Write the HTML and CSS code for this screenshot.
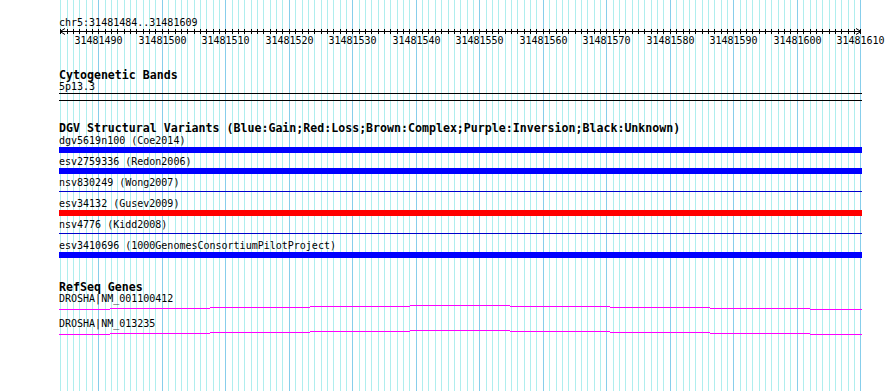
FILE: index.html
```html
<!DOCTYPE html>
<html lang="en">
    <head>
        <meta charset="UTF-8">
        <title>chr5:31481484..31481609</title>
        <link rel="stylesheet" href="styles.css">
        <script type="text/javascript" src="script.js" defer></script>
    </head>

    <body>
        <svg id="grid" width="890" height="391"></svg>

        <div id="view">
            <div class="locus">chr5:31481484..31481609</div>
            <svg id="ruler" width="831" height="20"></svg>

            <div class="track">
                <div class="track-title">Cytogenetic Bands</div>
                <div class="feature-label">5p13.3</div>
                <div class="band"></div>
            </div>

            <div class="track">
                <div class="track-title">DGV Structural Variants (Blue:Gain;Red:Loss;Brown:Complex;Purple:Inversion;Black:Unknown)</div>
                <div class="sv">
                    <div class="feature-label">dgv5619n100 (Coe2014)</div>
                    <div class="sv-glyph gain"></div>
                </div>
                <div class="sv">
                    <div class="feature-label">esv2759336 (Redon2006)</div>
                    <div class="sv-glyph gain"></div>
                </div>
                <div class="sv">
                    <div class="feature-label">nsv830249 (Wong2007)</div>
                    <div class="sv-glyph thin"></div>
                </div>
                <div class="sv">
                    <div class="feature-label">esv34132 (Gusev2009)</div>
                    <div class="sv-glyph loss"></div>
                </div>
                <div class="sv">
                    <div class="feature-label">nsv4776 (Kidd2008)</div>
                    <div class="sv-glyph thin"></div>
                </div>
                <div class="sv">
                    <div class="feature-label">esv3410696 (1000GenomesConsortiumPilotProject)</div>
                    <div class="sv-glyph gain"></div>
                </div>
            </div>

            <div class="track genes">
                <div class="track-title">RefSeq Genes</div>
                <div class="gene">
                    <div class="feature-label">DROSHA|NM_001100412</div>
                    <svg class="gene-line" width="803" height="13">
                        <path d="M0 5.5H51M51 4.5H151M151 3.5H251M251 2.5H351M351 1.5H451M451 2.5H551M551 3.5H651M651 4.5H751M751 5.5H803"/>
                    </svg>
                </div>
                <div class="gene">
                    <div class="feature-label">DROSHA|NM_013235</div>
                    <svg class="gene-line" width="803" height="13">
                        <path d="M0 5.5H51M51 4.5H151M151 3.5H251M251 2.5H351M351 1.5H451M451 2.5H551M551 3.5H651M651 4.5H751M751 5.5H803"/>
                    </svg>
                </div>
            </div>
        </div>
    </body>
</html>
```

FILE: styles.css
```css
body {
    margin: 0;
    padding: 0;
    background-color: white;
    color: black;
    font-family: "DejaVu Sans Mono", monospace;
    font-size: 10px;
    line-height: 12px;
}

#grid {
    position: absolute;
    top: 0;
    left: 0;
    shape-rendering: crispEdges;
}

#grid line {
    stroke: #afeeee;
    stroke-width: 1;
}

#grid line.major {
    stroke: #87ceeb;
}

#view {
    position: relative;
    margin-left: 59px;
    width: 803px;
    padding-top: 16px;
}

.locus {
    height: 12px;
    line-height: 14px;
}

#ruler {
    display: block;
    overflow: visible;
    shape-rendering: crispEdges;
}

#ruler line,
#ruler polyline {
    stroke: black;
    stroke-width: 1;
    fill: none;
}

#ruler polyline {
    shape-rendering: auto;
}

#ruler text {
    font-family: "DejaVu Sans Mono", monospace;
    font-size: 10px;
    fill: black;
}

.track {
    margin-top: 20px;
}

.track.genes {
    margin-top: 21px;
}

.track-title {
    font-weight: bold;
    font-size: 11.6px;
    height: 12px;
    line-height: 14px;
}

.feature-label {
    height: 12px;
    line-height: 14px;
    white-space: nowrap;
}

.band {
    margin-top: 1px;
    height: 6px;
    border-top: 1px solid black;
    border-bottom: 1px solid black;
}

.sv {
    padding-top: 1px;
    height: 20px;
}

.sv-glyph {
    margin-top: 1px;
    height: 6px;
}

.sv-glyph.gain {
    background: #0000ff;
}

.sv-glyph.loss {
    background: #ff0000;
}

.sv-glyph.thin {
    margin-top: 3px;
    height: 1px;
    background: #0000cc;
}

.gene-line {
    display: block;
    shape-rendering: crispEdges;
}

.gene-line path {
    stroke: #ff00ff;
    stroke-width: 1;
    fill: none;
}
```

FILE: script.js
```javascript
var SVGNS = 'http://www.w3.org/2000/svg';
var START = 31481484;
var BASES = 127;
var PX_PER_BASE = 6.35;
var ORIGIN = 60.2;
var VIEW_LEFT = 59;

function el(name, attrs) {
    var node = document.createElementNS(SVGNS, name);
    for (var k in attrs) node.setAttribute(k, attrs[k]);
    return node;
}

function baseX(i) {
    return Math.round(ORIGIN + i * PX_PER_BASE);
}

var grid = document.getElementById('grid');
var ruler = document.getElementById('ruler');

ruler.appendChild(el('line', { x1: 1, y1: 3.5, x2: 802, y2: 3.5 }));
ruler.appendChild(el('polyline', { points: '6,0.5 1,3.5 6,6.5' }));
ruler.appendChild(el('polyline', { points: '797,0.5 802,3.5 797,6.5' }));

for (var i = 0; i < BASES; i++) {
    var x = baseX(i);
    var major = (START + i) % 10 === 0;

    grid.appendChild(el('line', {
        x1: x + 0.5, y1: 0, x2: x + 0.5, y2: 391,
        'class': major ? 'major' : ''
    }));

    var lx = x - VIEW_LEFT + 0.5;
    ruler.appendChild(el('line', { x1: lx, y1: 1, x2: lx, y2: 6 }));

    if (major) {
        var t = el('text', { x: lx, y: 16, 'text-anchor': 'middle' });
        t.textContent = String(START + i);
        ruler.appendChild(t);
    }
}
```
